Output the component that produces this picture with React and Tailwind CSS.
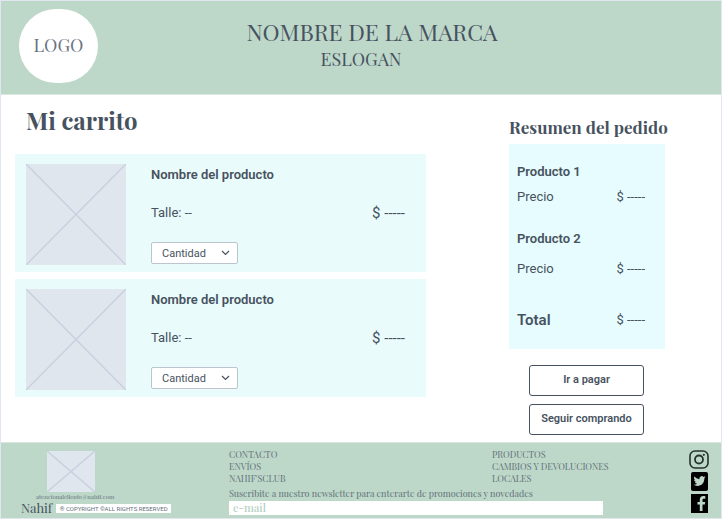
import React from "react";

const SERIF = "font-['Playfair_Display','Liberation_Serif',serif]";

function Placeholder({ className }) {
  return (
    <svg
      className={className}
      viewBox="0 0 100 100"
      preserveAspectRatio="none"
      role="img"
      aria-label="Imagen"
    >
      <rect width="100" height="100" fill="#dfe6ee" />
      <path
        d="M0 0L100 100M100 0L0 100"
        stroke="#c9d1df"
        strokeWidth="1.5"
        vectorEffect="non-scaling-stroke"
      />
    </svg>
  );
}

function Product({ id }) {
  return (
    <article className="flex h-[118px] bg-[#eafbfb] pt-[10px] pr-[21px] pl-[11px]">
      <Placeholder className="h-[101px] w-[100px] shrink-0" />
      <div className="flex min-w-0 flex-1 flex-col pl-[25px]">
        <h2 className="pt-px text-[13px] leading-5 font-semibold">Nombre del producto</h2>
        <div className="mt-[18px] flex items-center justify-between leading-5">
          <span className="text-[13px]">Talle: --</span>
          <span className="text-[15px]">$ -----</span>
        </div>
        <div className="relative mt-[19px] h-[22px] w-[87px]">
          <select
            id={id}
            aria-label="Cantidad"
            className="block h-[22px] w-full appearance-none rounded-xs border border-[#bcc5cf] bg-white pt-px pl-[10px] text-[11px] leading-5"
          >
            <option>Cantidad</option>
          </select>
          <svg
            className="pointer-events-none absolute top-[8px] right-[8px] h-[6px] w-[9px]"
            viewBox="0 0 9 6"
            fill="none"
            stroke="#475260"
            strokeWidth="1.2"
          >
            <path d="M1 1L4.500 4.500L8 1" />
          </svg>
        </div>
      </div>
    </article>
  );
}

function PriceRow({ children }) {
  return (
    <div className="flex items-center justify-between leading-5">
      {children}
      <span className="text-[13px]">$ -----</span>
    </div>
  );
}

function Instagram() {
  return (
    <svg className="h-[19px] w-5" viewBox="0 0 20 19" fill="none" stroke="#26332d">
      <rect x="1" y="1" width="18" height="17" rx="5" strokeWidth="1.600" />
      <circle cx="10" cy="9.500" r="4" strokeWidth="1.800" />
      <circle cx="14.800" cy="4.800" r="1.100" fill="#26332d" stroke="none" />
    </svg>
  );
}

function Twitter() {
  return (
    <svg className="h-[19px] w-[17px]" viewBox="0 0 17 19">
      <rect width="17" height="19" rx="2" fill="#000" />
      <g transform="translate(2.500 3) scale(.5)">
        <path
          fill="#bdd7c9"
          d="M23.950 4.570a10 10 0 0 1-2.820.780 4.960 4.960 0 0 0 2.160-2.730 9.900 9.900 0 0 1-3.130 1.190 4.920 4.920 0 0 0-8.380 4.480A13.930 13.930 0 0 1 1.640 3.160a4.920 4.920 0 0 0 1.520 6.570 4.900 4.900 0 0 1-2.230-.620v.060a4.920 4.920 0 0 0 3.950 4.830 5 5 0 0 1-2.210.080 4.940 4.940 0 0 0 4.600 3.420A9.870 9.870 0 0 1 0 19.540a13.990 13.990 0 0 0 7.560 2.210c9.050 0 14-7.500 14-13.990 0-.210 0-.420-.020-.630a9.940 9.940 0 0 0 2.410-2.560z"
        />
      </g>
    </svg>
  );
}

function Facebook() {
  return (
    <svg className="h-[19px] w-[17px]" viewBox="0 0 17 19">
      <rect width="17" height="19" fill="#000" />
      <path
        fill="#bdd7c9"
        d="M8.800 17V10.600H6.500V7.900h2.300V5.800c0-2.500 1.300-3.800 3.600-3.800.8 0 1.500.1 1.900.2v2.500h-1.400c-1.100 0-1.400.5-1.400 1.400v1.800h2.700l-.4 2.700h-2.300V17z"
      />
    </svg>
  );
}

function Links({ items }) {
  return (
    <ul className="w-[111px] text-[9px] leading-3 whitespace-nowrap">
      {items.map((item) => (
        <li key={item}>
          <a href="#">{item}</a>
        </li>
      ))}
    </ul>
  );
}

export default function App() {
  return (
    <div className="border border-[#e1e6f0] bg-white font-[Roboto,sans-serif] text-[#475260]">
      <header
        className={`${SERIF} grid h-[94px] grid-cols-[80px_1fr_80px] border-b border-[#d9e7e0] bg-[#bdd7c9] px-[18px]`}
      >
        <div className="mt-2 flex h-[74px] w-[79px] items-center justify-center rounded-full bg-white pb-px text-[18px] text-[#6a7380]">
          LOGO
        </div>
        <div className="pt-[17px] pl-[22px] text-center">
          <p className="text-[23px] leading-7">NOMBRE DE LA MARCA</p>
          <p className="pr-[22px] text-[18px] leading-[26px]">ESLOGAN</p>
        </div>
      </header>

      <main className="flex justify-between gap-6 pr-[52px] pl-[14px]">
        <section className="min-w-0 flex-[0_1_411px]">
          <h1 className={`${SERIF} pt-[9px] pl-[11px] text-[24px] leading-8 font-bold`}>
            Mi carrito
          </h1>
          <div className="mt-[18px] flex flex-col gap-[7px]">
            <Product id="cantidad-1" />
            <Product id="cantidad-2" />
          </div>
        </section>

        <section className="w-40 shrink-0 pb-[7px]">
          <h2 className={`${SERIF} pt-5 text-[17px] leading-6 font-bold whitespace-nowrap`}>
            Resumen del pedido
          </h2>
          <div className="mt-[5px] h-[205px] w-[156px] bg-[#e6fcff] pt-[18px] pr-5 pl-2">
            <h3 className="text-[13px] leading-5 font-semibold">Producto 1</h3>
            <div className="mt-[5px]">
              <PriceRow>
                <span className="text-[13px]">Precio</span>
              </PriceRow>
            </div>
            <h3 className="mt-[22px] text-[13px] leading-5 font-semibold">Producto 2</h3>
            <div className="mt-[10px]">
              <PriceRow>
                <span className="text-[13px]">Precio</span>
              </PriceRow>
            </div>
            <div className="mt-[31px]">
              <PriceRow>
                <span className="text-[15px] font-semibold">Total</span>
              </PriceRow>
            </div>
          </div>
          <div className="mt-4 ml-5 flex w-[115px] flex-col gap-2">
            <button className="h-[31px] rounded-[3px] border border-[#475260] bg-white pb-px text-[11px] font-semibold">
              Ir a pagar
            </button>
            <button className="h-[31px] rounded-[3px] border border-[#475260] bg-white pb-px text-[11px] font-semibold whitespace-nowrap">
              Seguir comprando
            </button>
          </div>
        </section>
      </main>

      <footer
        className={`${SERIF} flex h-[76px] border-t border-[#d9e7e0] bg-[#bdd7c9] pr-3 pl-5 text-[#5f7078]`}
      >
        <div className="w-[208px] shrink-0 pt-2">
          <Placeholder className="ml-[26px] h-[41px] w-12" />
          <a href="#" className="ml-[15px] block w-fit text-[6px] leading-[10px]">
            atencionalcliente@nahif.com
          </a>
          <div className="flex items-center gap-1">
            <span className="text-[13px] leading-3 text-[#475260]">Nahif</span>
            <small className="w-[115px] bg-white text-center font-[Roboto,sans-serif] text-[6px] leading-[9px] whitespace-nowrap">
              ® COPYRIGHT ©ALL RIGHTS RESERVED
            </small>
          </div>
        </div>
        <div className="min-w-0 flex-[0_1_374px] pt-[5px]">
          <div className="flex justify-between">
            <Links items={["CONTACTO", "ENVÍOS", "NAHIF'SCLUB"]} />
            <Links items={["PRODUCTOS", "CAMBIOS Y DEVOLUCIONES", "LOCALES"]} />
          </div>
          <label htmlFor="email" className="mt-[2px] block text-[9px] leading-[14px] whitespace-nowrap">
            Suscribite a nuestro newsletter para enterarte de promociones y novedades
          </label>
          <input
            id="email"
            type="email"
            placeholder="e-mail"
            className="mt-px block h-[14px] w-full bg-white px-1 text-[11px] leading-[14px] font-medium outline-none placeholder:text-[#b4cfc3]"
          />
        </div>
        <div className="ml-auto flex flex-col items-center gap-[3px] pt-[7px]">
          <a href="#" aria-label="Instagram"><Instagram /></a>
          <a href="#" aria-label="Twitter"><Twitter /></a>
          <a href="#" aria-label="Facebook"><Facebook /></a>
        </div>
      </footer>
    </div>
  );
}
